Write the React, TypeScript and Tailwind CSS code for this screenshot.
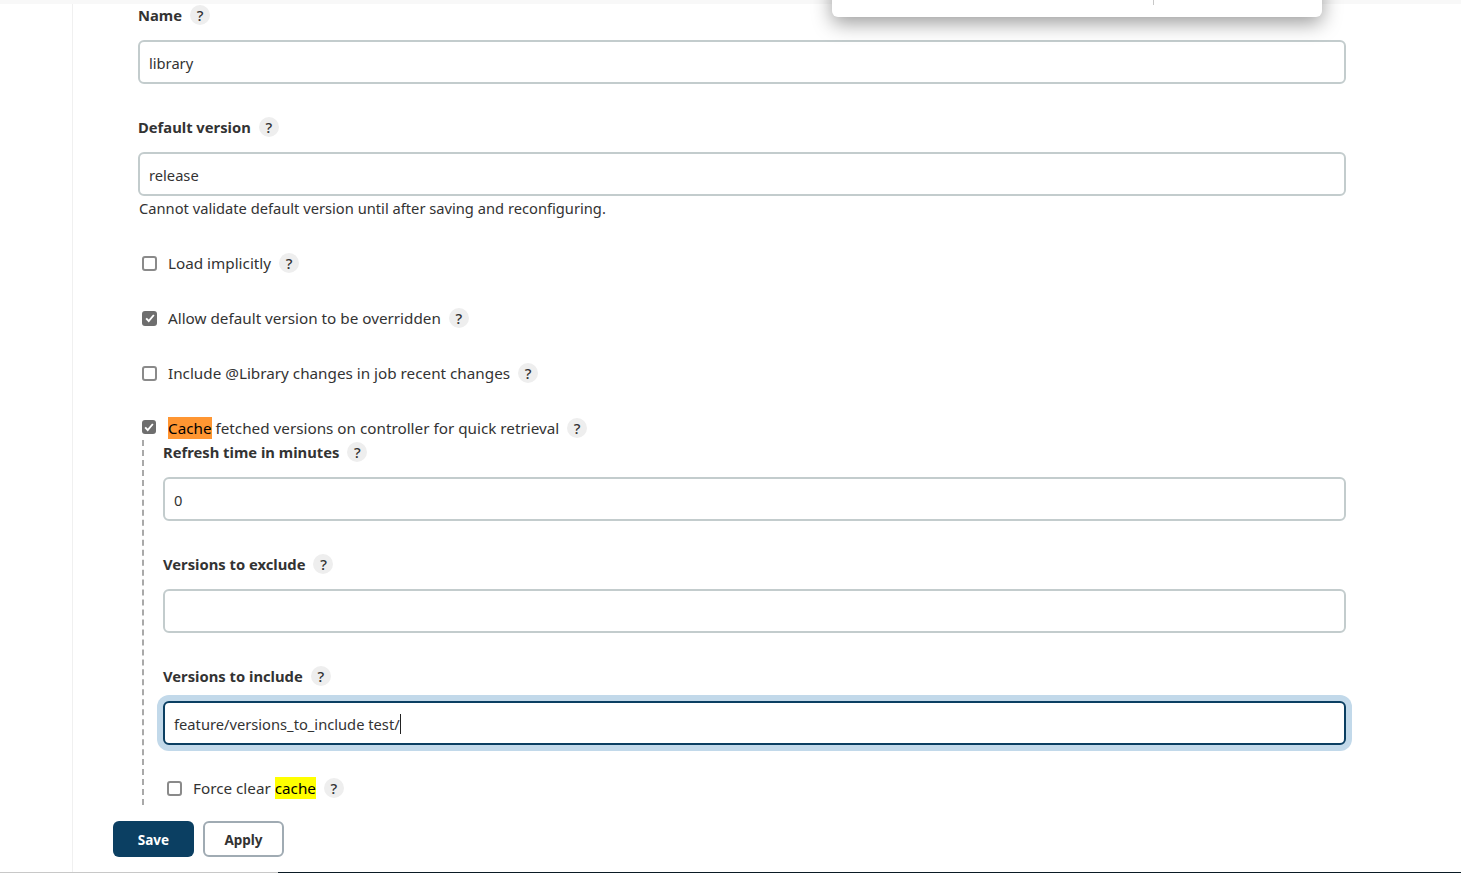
import React from 'react';

const fontStack = "font-['Noto_Sans','Open_Sans',sans-serif]";

function Help() {
  return (
    <span className="ml-2 flex h-5 w-5 shrink-0 items-center justify-center rounded-full bg-[#eeeeee] text-[15px] font-medium leading-none text-[#333333]">
      ?
    </span>
  );
}

function FieldLabel({ children, first }: { children: React.ReactNode; first?: boolean }) {
  return (
    <div className={`flex items-center text-[14.75px] font-bold text-[#333333] ${first ? 'mb-[14px] h-[22px]' : 'mb-[13px] h-6'}`}>
      {children}
      <Help />
    </div>
  );
}

function TextField({ value, className = '' }: { value: string; className?: string }) {
  return (
    <input
      readOnly
      value={value}
      className={`block h-[44px] w-full rounded-md border-2 border-[#c3cccd] bg-white px-[9px] pt-[2px] text-[14.7px] text-[#333333] outline-none ${className}`}
    />
  );
}

function Box({ checked, small }: { checked?: boolean; small?: boolean }) {
  return (
    <span
      className={`flex shrink-0 items-center justify-center rounded-[3px] ${small ? 'mb-[3px] h-[14px] w-[14px]' : 'h-[15px] w-[15px]'} ${
        checked ? 'bg-[#6e6e6e]' : 'border-2 border-[#8a8a8a] bg-white'
      }`}
    >
      {checked && (
        <svg viewBox="0 0 14 14" className="h-[12px] w-[12px]" fill="none" stroke="white" strokeWidth="2.2">
          <path d="M2.5 7.5 L5.5 10.5 L11.5 3.5" />
        </svg>
      )}
    </span>
  );
}

function CheckRow({ checked, small, children, mb = 'mb-[31px]' }: { checked?: boolean; small?: boolean; children: React.ReactNode; mb?: string }) {
  return (
    <div className={`flex h-6 items-center pl-[4px] text-[15.25px] text-[#333333] ${mb}`}>
      <Box checked={checked} small={small} />
      <span className={`flex items-center whitespace-pre ${small ? 'ml-[12px]' : 'ml-[11px]'}`}>{children}</span>
      <Help />
    </div>
  );
}

export default function App() {
  return (
    <div className={`relative flex h-[873px] w-full flex-col overflow-hidden bg-white ${fontStack}`}>
      <div className="h-1 shrink-0 bg-[#f8f8f8]" />

      {/* popup that lies over the page */}
      <div className="absolute left-[832px] top-[-20px] h-[37px] w-[490px] rounded-md bg-white shadow-[0_6px_20px_rgba(0,0,0,0.4)]">
        <div className="absolute bottom-[12px] left-[321px] h-[5px] w-px bg-[#c8c8c8]" />
      </div>

      <div className="flex min-h-0 flex-1">
        <div className="w-[73px] shrink-0 border-r border-[#f0f0f0]" />
        <div className="min-w-0 flex-1 pl-[40px] pr-[115px]">
          <div className="pl-[25px]">
            <FieldLabel first>Name</FieldLabel>
            <TextField value="library" className="mb-[31px]" />

            <FieldLabel>Default version</FieldLabel>
            <TextField value="release" />
            <div className="mb-[31px] flex h-6 items-center pl-px text-[14.7px] text-[#333333]">
              Cannot validate default version until after saving and reconfiguring.
            </div>

            <CheckRow>Load implicitly</CheckRow>
            <CheckRow checked>Allow default version to be overridden</CheckRow>
            <CheckRow>Include @Library changes in job recent changes</CheckRow>
            <CheckRow checked small mb="mb-0">
              <span className="bg-[#ff9632] text-black">Cache</span> fetched versions on controller for quick retrieval
            </CheckRow>

            <div className="ml-[4px] border-l-2 border-dashed border-[#a9a9a9] pb-[5px] pl-[19px]">
              <FieldLabel>Refresh time in minutes</FieldLabel>
              <TextField value="0" className="mb-[31px]" />

              <FieldLabel>Versions to exclude</FieldLabel>
              <TextField value="" className="mb-[31px]" />

              <FieldLabel>Versions to include</FieldLabel>
              <div className="mb-[31px] flex h-[44px] w-full items-center rounded-md border-2 border-[#0b3f62] bg-white px-[9px] pt-[2px] text-[14.7px] text-[#333333] shadow-[0_0_0_6px_#c2d9ea]">
                feature/versions_to_include test/
                <span className="h-[20px] w-px bg-[#222222]" />
              </div>

              <CheckRow mb="mb-0">
                Force clear <span className="bg-[#ffff00] text-black">cache</span>
              </CheckRow>
            </div>
          </div>

          <div className="flex gap-[9px] pt-[16px]">
            <button className="h-[36px] w-[81px] rounded-md bg-[#0b3f62] pt-[2px] text-[13.5px] font-bold text-white">Save</button>
            <button className="h-[36px] w-[81px] rounded-md border-2 border-[#a0abb3] bg-white pt-[2px] text-[13.5px] font-bold text-[#333333]">
              Apply
            </button>
          </div>
        </div>
      </div>

      <div className="flex h-px shrink-0">
        <div className="w-[278px] bg-[#c8c8c8]" />
        <div className="flex-1 bg-[#0a1a24]" />
      </div>
    </div>
  );
}
